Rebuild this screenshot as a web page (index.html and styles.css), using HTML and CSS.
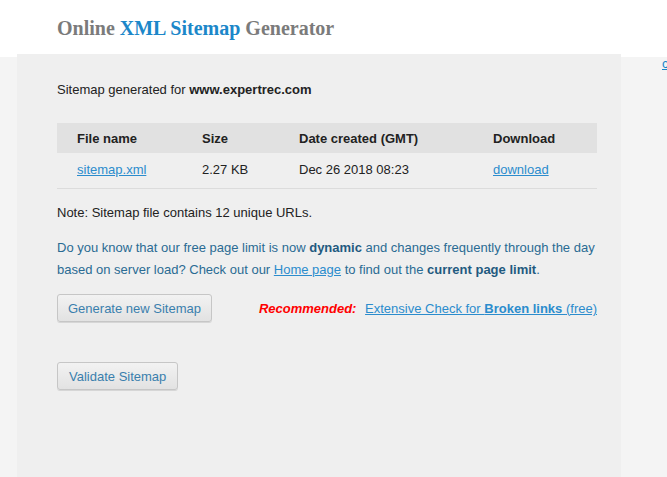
FILE: index.html
```html
<!DOCTYPE html>
<html lang="en">
<head>
    <meta charset="UTF-8">
    <title>Online XML Sitemap Generator</title>
    <link rel="stylesheet" href="styles.css">
</head>
<body>
    <div class="header">
        <h1><span class="grey">Online</span> XML Sitemap <span class="grey">Generator</span></h1>
    </div>
    <div class="page">
        <div class="panel">
            <p class="generated">Sitemap generated for <b>www.expertrec.com</b></p>

            <table class="files">
                <tr>
                    <th class="c1">File name</th>
                    <th class="c2">Size</th>
                    <th class="c3">Date created (GMT)</th>
                    <th class="c4">Download</th>
                </tr>
                <tr>
                    <td><a href="#">sitemap.xml</a></td>
                    <td>2.27 KB</td>
                    <td>Dec 26 2018 08:23</td>
                    <td><a href="#">download</a></td>
                </tr>
            </table>

            <p class="note">Note: Sitemap file contains 12 unique URLs.</p>

            <p class="info">Do you know that our free page limit is now <b>dynamic</b> and changes frequently through the day based on server load? Check out our <a href="#">Home page</a> to find out the <b>current page limit</b>.</p>

            <div class="actions">
                <button class="btn">Generate new Sitemap</button>
                <div class="recommend">
                    <span class="rec-label">Recommended:</span>
                    <a href="#">Extensive Check for <b>Broken links </b>(free)</a>
                </div>
            </div>

            <button class="btn validate">Validate Sitemap</button>
        </div>
        <div class="side">
            <a href="#">c</a>
        </div>
    </div>
</body>
</html>
```

FILE: styles.css
```css
html, body {
    margin: 0;
    height: 100%;
}
body {
    background-color: #f4f4f4;
    font-family: "Liberation Sans", Arial, sans-serif;
    font-size: 13px;
    color: #222;
    overflow: hidden;
}
.header {
    background-color: #fff;
    height: 54px;
}
.header h1 {
    margin: 0;
    padding: 16px 0 0 57px;
    font-family: "Liberation Serif", "Times New Roman", serif;
    font-size: 20px;
    font-weight: bold;
    color: #1c87c9;
    line-height: 24px;
}
.grey {
    color: #7b7b7b;
}
.page {
    display: flex;
    height: 423px;
    background: linear-gradient(#fff 0, #fff 3px, #f4f4f4 3px);
}
.panel {
    width: 540px;
    margin-left: 17px;
    padding: 0 24px 0 40px;
    background-color: #efefef;
}
.side {
    padding: 2px 0 0 41px;
    overflow: hidden;
}
.side a {
    color: #1a85c8;
    font-size: 13px;
}
a {
    color: #2b8ccd;
}
.generated {
    margin: 28px 0 0;
    line-height: 16px;
}
.files {
    width: 540px;
    margin-top: 25px;
    border-collapse: collapse;
}
.files th {
    background-color: #e1e1e1;
    text-align: left;
    font-weight: bold;
    height: 30px;
    padding: 0 0 0 20px;
}
.files td {
    height: 33px;
    padding: 0 0 2px 20px;
    border-bottom: 1px solid #dcdcdc;
}
.c1 { width: 105px; }
.c2 { width: 77px; }
.c3 { width: 174px; }
.note {
    margin: 16px 0 0;
    line-height: 16px;
}
.info {
    margin: 16px 0 0;
    line-height: 22px;
    color: #2a6b93;
}
.info b {
    color: #1f5a80;
}
.actions {
    display: flex;
    align-items: center;
    justify-content: space-between;
    margin-top: 13px;
}
.btn {
    font-family: "Liberation Sans", Arial, sans-serif;
    font-size: 13px;
    color: #3a7fad;
    background: linear-gradient(#f2f2f2, #e2e2e2);
    border: 1px solid #c6c6c6;
    border-radius: 3px;
    height: 28px;
    padding: 0 10px;
    box-shadow: 0 1px 0 #d6d6d6;
}
.rec-label {
    color: #f00;
    font-weight: bold;
    font-style: italic;
    margin-right: 5px;
}
.validate {
    margin-top: 40px;
    padding: 0 11px;
}
```
